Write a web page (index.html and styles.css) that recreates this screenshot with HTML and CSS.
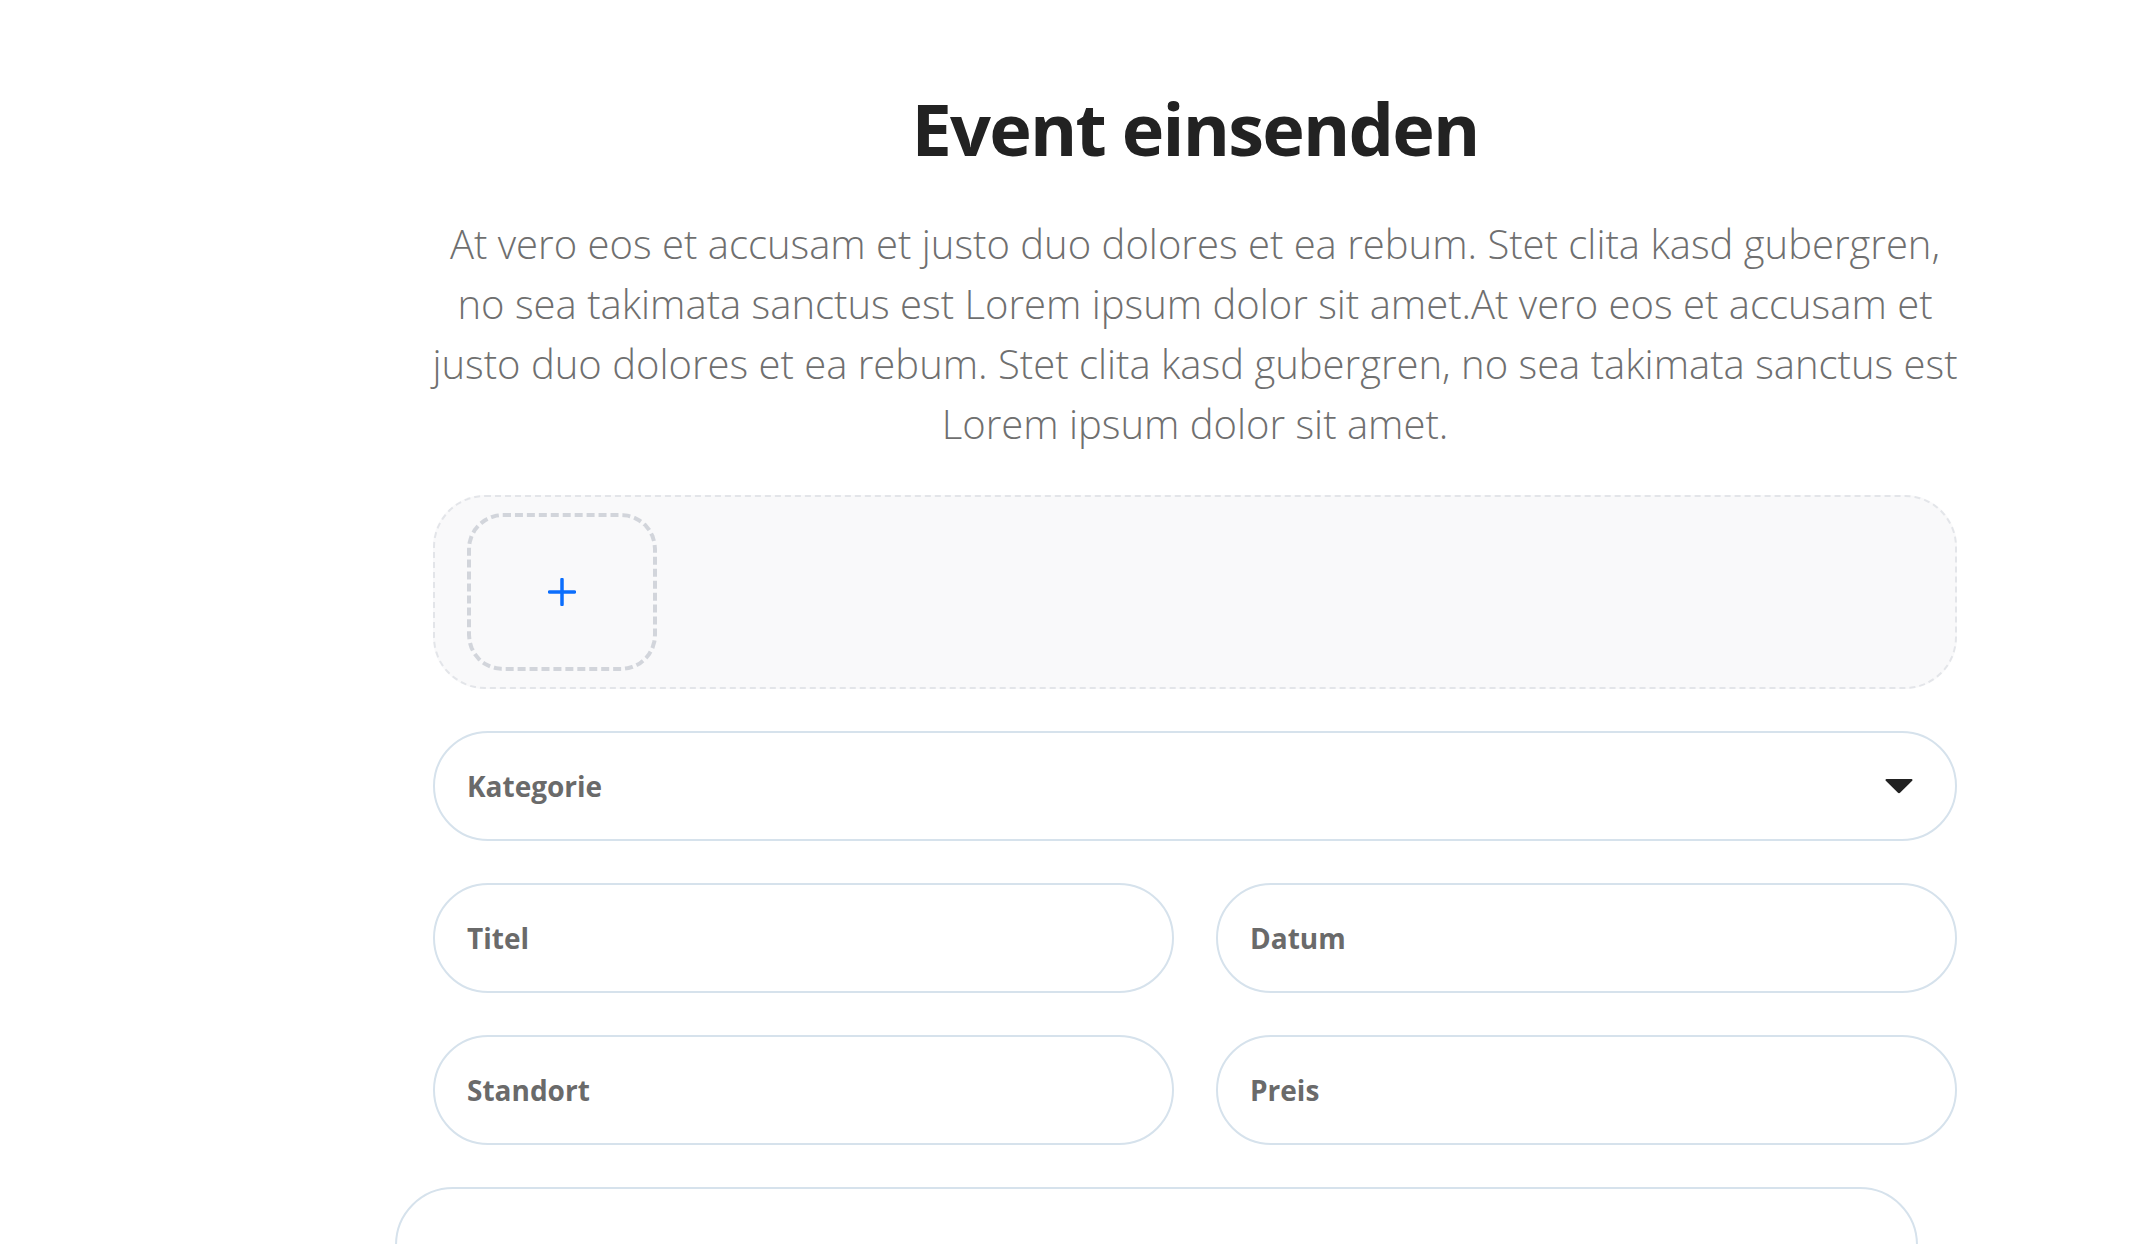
FILE: index.html
```html
<!DOCTYPE html>
<html lang="de">
<head>
<meta charset="utf-8">
<title>Event einsenden</title>
<link rel="stylesheet" href="styles.css">
</head>
<body>
<main class="page">
  <section class="container">
    <h1 class="title">Event einsenden</h1>
    <p class="lead">At vero eos et accusam et justo duo dolores et ea rebum. Stet clita kasd gubergren, no sea takimata sanctus est Lorem ipsum dolor sit amet.At vero eos et accusam et justo duo dolores et ea rebum. Stet clita kasd gubergren, no sea takimata sanctus est Lorem ipsum dolor sit amet.</p>
    <form class="form">
      <div class="upload">
        <div class="upload-add">
          <svg class="plus" width="28" height="28" viewBox="0 0 28 28"><path d="M14 1.5v25M1.5 14h25" stroke="#0b6efd" stroke-width="3.5" stroke-linecap="round" fill="none"/></svg>
        </div>
      </div>
      <div class="field select">
        <span class="label">Kategorie</span>
        <svg class="caret" width="28" height="16" viewBox="0 0 28 16"><path d="M1.5 1h25c1 0 1.4 1.1.7 1.8L15.3 14.6c-.7.7-1.9.7-2.6 0L.8 2.8C.1 2.1.5 1 1.5 1z" fill="#222"/></svg>
      </div>
      <div class="row">
        <div class="field"><span class="label">Titel</span></div>
        <div class="field"><span class="label">Datum</span></div>
      </div>
      <div class="row">
        <div class="field"><span class="label">Standort</span></div>
        <div class="field"><span class="label">Preis</span></div>
      </div>
      <div class="textarea"></div>
    </form>
  </section>
</main>
</body>
</html>
```
FILE: styles.css
```css
html, body {
  margin: 0;
  padding: 0;
  background: #ffffff;
}
body {
  font-family: "Open Sans", "Noto Sans", sans-serif;
  color: #222222;
}
.page {
  padding-top: 92px;
}
.container {
  width: 1524px;
  margin-left: 433px;
}
.title {
  margin: 0;
  font-size: 72px;
  line-height: 72px;
  font-weight: 700;
  letter-spacing: -1.8px;
  text-align: center;
  color: #222222;
}
.lead {
  margin: 50px -8px 0;
  font-size: 40px;
  line-height: 60px;
  font-weight: 300;
  color: #6f6f6f;
  text-align: center;
}
.form {
  margin-top: 41px;
  display: flex;
  flex-direction: column;
  gap: 42px;
}
.upload {
  box-sizing: border-box;
  height: 194px;
  padding: 16px 32px;
  border: 2px dashed #e3e5e9;
  border-radius: 52px;
  background: #f9f9fa;
  display: flex;
  align-items: center;
}
.upload-add {
  box-sizing: border-box;
  width: 190px;
  height: 158px;
  border: 4px dashed #d2d5db;
  border-radius: 36px;
  display: flex;
  align-items: center;
  justify-content: center;
}
.field {
  box-sizing: border-box;
  height: 110px;
  border: 2px solid #d6e2ec;
  border-radius: 55px;
  padding: 0 42px 0 32px;
  display: flex;
  align-items: center;
  justify-content: space-between;
  background: #fff;
}
.label {
  font-size: 28px;
  font-weight: 700;
  color: #6a6a6a;
}
.caret {
  display: block;
}
.row {
  display: grid;
  grid-template-columns: 1fr 1fr;
  gap: 42px;
}
.textarea {
  box-sizing: border-box;
  width: 1523px;
  height: 300px;
  margin-left: -38px;
  border: 2px solid #d6e2ec;
  border-radius: 58px;
}
```
